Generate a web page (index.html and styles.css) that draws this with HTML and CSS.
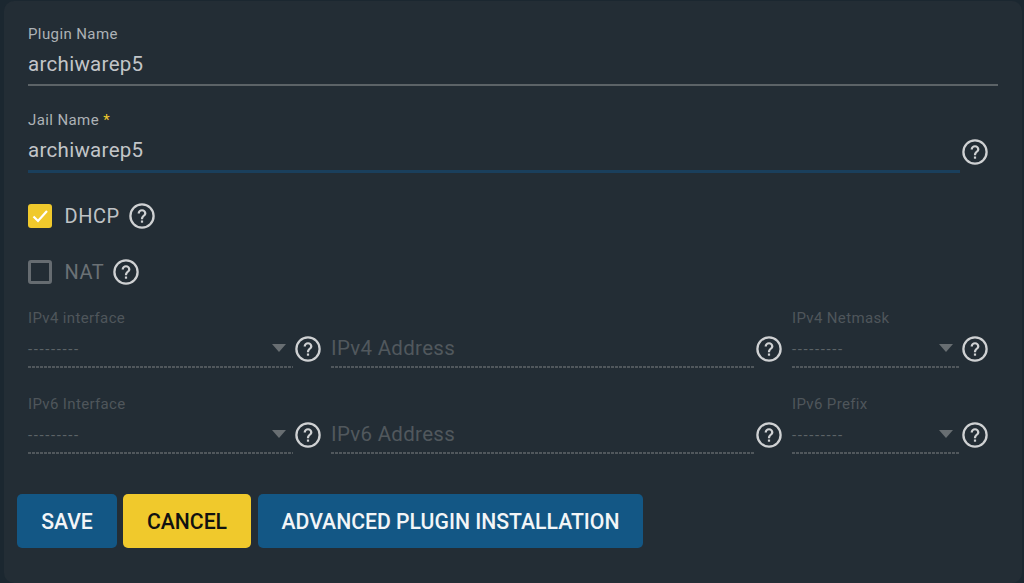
FILE: index.html
```html
<!DOCTYPE html>
<html lang="en">
<head>
<meta charset="utf-8">
<title>Plugin install</title>
<link rel="stylesheet" href="styles.css">
</head>
<body>
<svg class="defs" width="0" height="0" aria-hidden="true">
  <symbol id="help" viewBox="0 0 26 26">
    <circle cx="13" cy="13" r="11.6" fill="none" stroke="currentColor" stroke-width="2.3"/>
    <path d="M8.600 10.400c0-2.500 2-4.200 4.400-4.200s4.400 1.700 4.400 4c0 2.900-3.300 3-3.300 6h-2.200c0-3.900 3.200-3.800 3.200-6 0-1.100-.9-1.900-2.100-1.900s-2.100.9-2.100 2.100z" fill="currentColor"/>
    <rect x="11.900" y="17.500" width="2.200" height="2.200" fill="currentColor"/>
  </symbol>
</svg>
<main class="card">
  <form class="form">
    <div class="field field-plugin">
      <label class="label">Plugin Name</label>
      <div class="value">archiwarep5</div>
    </div>
    <div class="field-row jail-row">
      <div class="field field-jail">
        <label class="label">Jail Name <span class="req">*</span></label>
        <div class="value">archiwarep5</div>
      </div>
      <svg class="help"><use href="#help"/></svg>
    </div>
    <div class="check-row check-dhcp">
      <span class="box box-on">
        <svg viewBox="0 0 24 24" width="24" height="24"><path d="M5.500 12.500l4.500 4.500 9-10" fill="none" stroke="#fff" stroke-width="2.200"/></svg>
      </span>
      <span class="check-text">DHCP</span>
      <svg class="help"><use href="#help"/></svg>
    </div>
    <div class="check-row check-nat">
      <span class="box"></span>
      <span class="check-text muted">NAT</span>
      <svg class="help"><use href="#help"/></svg>
    </div>
    <div class="net-row net-first">
      <div class="net-cell col-a">
        <div class="ctl select">
          <span class="small-label">IPv4 interface</span>
          <div class="select-line"><span class="dashes">---------</span><span class="caret"></span></div>
        </div>
        <svg class="help"><use href="#help"/></svg>
      </div>
      <div class="net-cell col-b">
        <div class="ctl input"><span class="placeholder">IPv4 Address</span></div>
        <svg class="help"><use href="#help"/></svg>
      </div>
      <div class="net-cell col-c">
        <div class="ctl select">
          <span class="small-label">IPv4 Netmask</span>
          <div class="select-line"><span class="dashes">---------</span><span class="caret"></span></div>
        </div>
        <svg class="help"><use href="#help"/></svg>
      </div>
    </div>
    <div class="net-row">
      <div class="net-cell col-a">
        <div class="ctl select">
          <span class="small-label">IPv6 Interface</span>
          <div class="select-line"><span class="dashes">---------</span><span class="caret"></span></div>
        </div>
        <svg class="help"><use href="#help"/></svg>
      </div>
      <div class="net-cell col-b">
        <div class="ctl input"><span class="placeholder">IPv6 Address</span></div>
        <svg class="help"><use href="#help"/></svg>
      </div>
      <div class="net-cell col-c">
        <div class="ctl select">
          <span class="small-label">IPv6 Prefix</span>
          <div class="select-line"><span class="dashes">---------</span><span class="caret"></span></div>
        </div>
        <svg class="help"><use href="#help"/></svg>
      </div>
    </div>
    <div class="actions">
      <button type="button" class="btn btn-blue btn-save">SAVE</button>
      <button type="button" class="btn btn-yellow btn-cancel">CANCEL</button>
      <button type="button" class="btn btn-blue btn-adv">ADVANCED PLUGIN INSTALLATION</button>
    </div>
  </form>
</main>
</body>
</html>
```
FILE: styles.css
```css
* { box-sizing: border-box; }
html, body { margin: 0; height: 583px; overflow: hidden; }
body {
  background: #1b2730;
  font-family: Roboto, "Noto Sans", sans-serif;
  color: #b9bdc0;
  padding: 1px 2px 0 4px;
}
.defs { display: block; height: 0; }
.card {
  height: 582px;
  background: #232d35;
  border-radius: 10px;
  padding: 0 24px 0 13px;
}
.form { display: flex; flex-direction: column; }
.field, .jail-row, .check-row, .net-row { margin-left: 11px; }
.field-row .field { margin-left: 0; }
.field { display: flex; flex-direction: column; }
.label {
  display: block;
  font-size: 15px;
  line-height: 18px;
  color: #adb2b6;
  letter-spacing: .4px;
}
.req { color: #f0c92c; }
.value {
  font-size: 20.500px;
  line-height: 28px;
  margin-top: 7px;
  padding-bottom: 6px;
  color: #c2c5c8;
  letter-spacing: .3px;
}
.field-plugin { padding-top: 24px; }
.field-plugin .value { border-bottom: 2px solid #5c6367; }
.jail-row { display: flex; gap: 2px; margin-top: 25px; align-items: flex-start; }
.field-jail { flex: 0 0 932px; }
.field-jail .value { border-bottom: 3px solid #1a3f5c; }
.help {
  width: 26px;
  height: 26px;
  color: #cfd1d3;
  flex: none;
}
.jail-row .help { margin-top: 28px; }
.check-row { display: flex; align-items: center; height: 26px; }
.check-dhcp { margin-top: 30px; }
.check-nat { margin-top: 30px; }
.box {
  width: 24px;
  height: 24px;
  border: 3px solid #666c71;
  border-radius: 3px;
  flex: none;
  display: block;
}
.box-on { background: #f0c92c; border: 0; }
.box-on svg { display: block; }
.check-text { font-size: 20px; line-height: 26px; margin: 0 9px 0 12.500px; color: #bfc2c5; letter-spacing: .5px; }
.check-text.muted { color: #6b7175; }
.net-row { display: flex; height: 60px; }
.net-first { margin-top: 24px; }
.net-row + .net-row { margin-top: 26px; }
.net-cell { display: flex; align-items: flex-start; gap: 2px; }
.net-cell .help { margin-top: 27px; }
.col-a { width: 303px; }
.col-b { width: 461px; }
.col-c { width: 198px; }
.ctl { height: 59px; }
.col-a .ctl { flex: 0 0 265px; }
.col-b .ctl { flex: 0 0 423px; }
.col-c .ctl { flex: 0 0 168px; }
.ctl {
  background-image: linear-gradient(to right, #50575c 0 3px, transparent 3px 4px);
  background-size: 4px 2px;
  background-repeat: repeat-x;
  background-position: left bottom;
}
.small-label {
  display: block;
  font-size: 15px;
  line-height: 18px;
  color: #4f565b;
  letter-spacing: .35px;
}
.select-line { display: flex; align-items: center; justify-content: space-between; height: 26px; margin-top: 9px; padding-right: 7px; }
.dashes { font-size: 15px; color: #5c6367; letter-spacing: 1.600px; }
.caret { width: 0; height: 0; border-left: 7px solid transparent; border-right: 7px solid transparent; border-top: 8px solid #686e72; margin-top: -3px; }
.input { padding-top: 25px; }
.placeholder { display: block; font-size: 20.500px; line-height: 28px; color: #51585d; letter-spacing: .3px; }
.actions { display: flex; gap: 6px; margin-top: 39px; }
.btn {
  height: 54px;
  border: 0;
  border-radius: 5px;
  font: 500 21.200px Roboto, sans-serif;
  padding: 0;
  text-align: center;
}
.btn-blue { background: #135785; color: #f2f5f7; }
.btn-yellow { background: #f0c92c; color: #111; }
.btn-save { width: 100px; }
.btn-cancel { width: 128px; }
.btn-adv { width: 385px; margin-left: 1px; }
```
